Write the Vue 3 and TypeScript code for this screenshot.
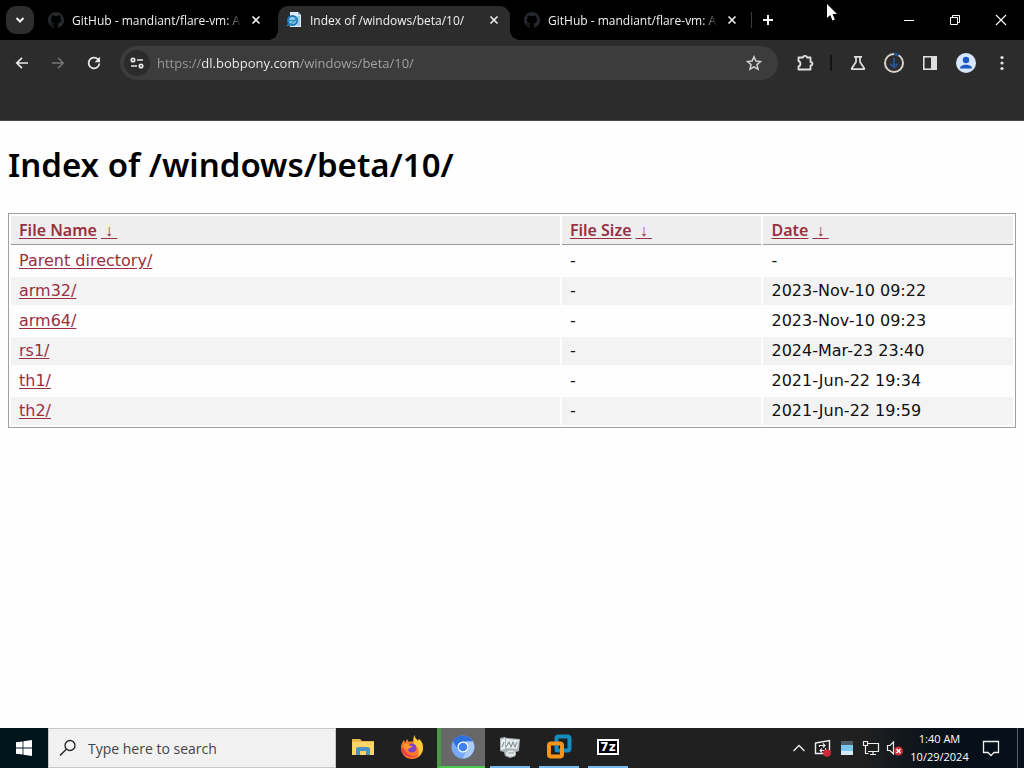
<script setup lang="ts">
import { ref } from 'vue'

interface Tab {
  id: number
  title: string
  icon: 'github' | 'page'
}

interface Entry {
  name: string
  size: string
  date: string
}

const tabs: Tab[] = [
  { id: 1, title: 'GitHub - mandiant/flare-vm: A', icon: 'github' },
  { id: 2, title: 'Index of /windows/beta/10/', icon: 'page' },
  { id: 3, title: 'GitHub - mandiant/flare-vm: A', icon: 'github' },
]
const activeTab = ref(2)
const url = ref('https://dl.bobpony.com/windows/beta/10/')
const query = ref('')

const columns: string[] = ['File Name', 'File Size', 'Date']
const entries: Entry[] = [
  { name: 'Parent directory/', size: '-', date: '-' },
  { name: 'arm32/', size: '-', date: '2023-Nov-10 09:22' },
  { name: 'arm64/', size: '-', date: '2023-Nov-10 09:23' },
  { name: 'rs1/', size: '-', date: '2024-Mar-23 23:40' },
  { name: 'th1/', size: '-', date: '2021-Jun-22 19:34' },
  { name: 'th2/', size: '-', date: '2021-Jun-22 19:59' },
]
</script>

<template>
  <div class="screen">
    <header class="browser">
      <div class="tabstrip">
        <button class="tab-search" aria-label="Search tabs">
          <svg width="12" height="12" viewBox="0 0 12 12"><path d="M2.5 4 6 7.5 9.500 4" fill="none" stroke="#eee" stroke-width="2" /></svg>
        </button>
        <div class="tabs">
          <div v-for="t in tabs" :key="t.id" class="tab" :class="{ active: t.id === activeTab }">
            <svg v-if="t.icon === 'github'" class="favicon" viewBox="0 0 16 16">
              <path fill="#25282c" d="M8 0C3.600 0 0 3.600 0 8c0 3.500 2.300 6.500 5.500 7.600.4.100.5-.2.500-.4v-1.400c-2.200.5-2.700-1-2.700-1-.4-.9-.9-1.200-.9-1.200-.7-.5.100-.5.100-.5.800.100 1.200.8 1.200.8.700 1.200 1.900.9 2.300.7.100-.5.300-.9.500-1.100-1.800-.2-3.600-.9-3.600-4 0-.9.300-1.600.8-2.100-.1-.2-.4-1 .1-2.100 0 0 .7-.2 2.200.8a7.500 7.500 0 0 1 4 0c1.500-1 2.200-.8 2.200-.8.500 1.100.2 1.900.1 2.100.5.500.8 1.200.8 2.100 0 3.100-1.900 3.800-3.700 4 .3.300.6.800.6 1.500v2.200c0 .2.100.5.500.4A8 8 0 0 0 16 8c0-4.400-3.600-8-8-8z" />
            </svg>
            <svg v-else class="favicon" viewBox="0 0 16 16">
              <path d="M4 0h8l3 3v12H4z" fill="#dcecfa" />
              <path d="M12 0v3h3z" fill="#7fb2dd" />
              <path d="M11 4h3v10h-3z" fill="#a8cdf0" />
              <circle cx="6.500" cy="8.500" r="4.500" fill="#9ccbe8" stroke="#1b79b8" stroke-width="2" />
              <path d="M3 8.500h8M1 13c1 1 6-1 10-8" stroke="#2f95c4" stroke-width="1.500" fill="none" />
            </svg>
            <button class="tab-title" @click="activeTab = t.id">{{ t.title }}</button>
            <button class="tab-close" aria-label="Close tab">
              <svg width="10" height="10" viewBox="0 0 10 10"><path d="M1.500 1.500l7 7m0-7l-7 7" stroke="#eee" stroke-width="1.600" /></svg>
            </button>
          </div>
        </div>
        <span class="strip-divider"></span>
        <button class="new-tab" aria-label="New tab">
          <svg width="12" height="12" viewBox="0 0 12 12"><path d="M6 1v10M1 6h10" stroke="#f4f4f4" stroke-width="2" /></svg>
        </button>
        <div class="window-controls">
          <button aria-label="Minimize"><svg width="12" height="12" viewBox="0 0 12 12"><path d="M1 6.500h10" stroke="#fff" /></svg></button>
          <button aria-label="Restore"><svg width="12" height="12" viewBox="0 0 12 12"><path d="M1.500 3.500h7v7h-7zM3.500 3.500v-2h7v7h-2" fill="none" stroke="#fff" /></svg></button>
          <button aria-label="Close"><svg width="12" height="12" viewBox="0 0 12 12"><path d="M1 1l10 10M11 1L1 11" stroke="#fff" stroke-width="1.100" /></svg></button>
        </div>
      </div>

      <div class="toolbar">
        <nav class="nav">
          <button aria-label="Back"><svg width="14" height="14" viewBox="0 0 14 14"><path d="M13 7H2M7 1.800L1.800 7 7 12.200" fill="none" stroke="#e8e8e8" stroke-width="1.700" /></svg></button>
          <button aria-label="Forward"><svg width="14" height="14" viewBox="0 0 14 14"><path d="M1 7h11M7 1.800L12.200 7 7 12.200" fill="none" stroke="#747474" stroke-width="1.600" /></svg></button>
          <button aria-label="Reload"><svg width="14" height="14" viewBox="0 0 14 14"><path d="M12.400 7.500A5.400 5.400 0 1 1 11 3.300" fill="none" stroke="#e8e8e8" stroke-width="1.800" /><path d="M13 .8v5.400H7.600z" fill="#e8e8e8" /></svg></button>
        </nav>
        <div class="omnibox">
          <button class="site-info" aria-label="View site information">
            <svg width="14" height="12" viewBox="0 0 14 12"><g fill="none" stroke="#e6e6e6" stroke-width="1.700"><circle cx="3" cy="3" r="1.700" /><path d="M7 3h6M1 9h6" /><circle cx="11" cy="9" r="1.700" /></g></svg>
          </button>
          <input v-model="url" class="url" type="text" aria-label="Address" spellcheck="false" />
          <button class="bookmark" aria-label="Bookmark this tab">
            <svg width="16" height="16" viewBox="0 0 16 16"><path d="M8 1.800l1.900 4.300 4.600.4-3.500 3.100 1 4.600L8 11.800l-4 2.400 1-4.600-3.500-3.100 4.600-.4z" fill="none" stroke="#d0d0d0" stroke-width="1.500" /></svg>
          </button>
        </div>
        <button class="extensions" aria-label="Extensions">
          <svg width="18" height="18" viewBox="0 0 18 18"><path d="M2.500 3.500H7c0-2.300 4-2.300 4 0h3.500V8c2.500 0 2.500 3.500 0 3.500v4h-12v-3c2.500-.5 2.500-5 0-5.500z" fill="none" stroke="#e0e0e0" stroke-width="1.800" stroke-linejoin="round" /></svg>
        </button>
        <span class="tool-divider"></span>
        <div class="tools">
          <button aria-label="Labs"><svg width="16" height="16" viewBox="0 0 16 16"><path d="M4 1.800h8M6 2v5L1.800 13.200c-.3.600 0 1 .6 1h11.200c.6 0 .9-.4.600-1L10 7V2" fill="none" stroke="#e0e0e0" stroke-width="1.700" /></svg></button>
          <button aria-label="Downloads"><svg width="22" height="22" viewBox="0 0 22 22"><circle cx="11" cy="11" r="9" fill="none" stroke="#d7d2cc" stroke-width="2" /><path d="M11 2a9 9 0 0 1 4.500 1.200" fill="none" stroke="#284a86" stroke-width="3" /><path d="M11 6v9M7 11.500l4 4 4-4" fill="none" stroke="#27508f" stroke-width="2" /></svg></button>
          <button aria-label="Side panel"><svg width="16" height="16" viewBox="0 0 16 16"><rect x="1.800" y="1.800" width="12.400" height="12.400" fill="none" stroke="#dedede" stroke-width="1.600" /><path d="M9 2h5v12H9z" fill="#dedede" /></svg></button>
          <button aria-label="Profile"><svg width="20" height="20" viewBox="0 0 20 20"><circle cx="10" cy="10" r="10" fill="#d8e6fd" /><circle cx="10" cy="7" r="3.200" fill="#1a5bc4" /><path d="M4 15.500c0-5 12-5 12 0z" fill="#1a5bc4" /></svg></button>
          <button aria-label="Menu"><svg width="4" height="16" viewBox="0 0 4 16"><g fill="#e6e6e6"><circle cx="2" cy="2.500" r="1.600" /><circle cx="2" cy="8" r="1.600" /><circle cx="2" cy="13.500" r="1.600" /></g></svg></button>
        </div>
      </div>
    </header>

    <main class="page">
      <h1>Index of /windows/beta/10/</h1>
      <table>
        <thead>
          <tr>
            <th v-for="c in columns" :key="c" scope="col"><a href="#">{{ c }}</a><a href="#" class="sort">&nbsp;↓&nbsp;</a></th>
          </tr>
        </thead>
        <tbody>
          <tr v-for="e in entries" :key="e.name">
            <td><a href="#">{{ e.name }}</a></td>
            <td>{{ e.size }}</td>
            <td>{{ e.date }}</td>
          </tr>
        </tbody>
      </table>
    </main>

    <footer class="taskbar">
      <button class="start" aria-label="Start">
        <svg width="16" height="16" viewBox="0 0 16 16"><path d="M0 2.300l6.600-.9v6.200H0zM7.400 1.200L16 0v7.600H7.400zM0 8.400h6.600v6.200L0 13.700zM7.400 8.400H16V16l-8.600-1.200z" fill="#fff" /></svg>
      </button>
      <label class="search">
        <svg width="18" height="18" viewBox="0 0 18 18"><circle cx="11" cy="6.500" r="5" fill="none" stroke="#222" stroke-width="1.300" /><path d="M7.300 10.200L1 16.500" stroke="#222" stroke-width="1.400" /></svg>
        <input v-model="query" type="text" placeholder="Type here to search" aria-label="Type here to search" />
      </label>
      <div class="apps">
        <button aria-label="File Explorer">
          <svg width="24" height="24" viewBox="0 0 24 24"><path d="M1 4h8l2 2h12v14H1z" fill="#eab64c" /><path d="M1 7h22v13H1z" fill="#fbd568" /><path d="M5 20v-6c0-1 1-2 2-2h10c1 0 2 1 2 2v6h-4v-4H9v4z" fill="#4a92c8" /></svg>
        </button>
        <button aria-label="Firefox">
          <svg width="24" height="24" viewBox="0 0 24 24"><path d="M15 0c-1 3 2 4 3 6l1-2c3 3 4 5 4 9a11 11 0 0 1-22 0c0-3 1-6 3-8l1 3 2-4 2 3c2-1 4-1 5 0 0-3-1-5 1-7z" fill="#ff7b2c" /><path d="M15 0c-1 3 2 4 3 6l1-2c3 3 4 5 4 9 0 3-2 7-5 9 2-6 0-11-4-12-1-4-1-8 1-10z" fill="#ffc93a" /><path d="M1 13c1 8 10 12 18 7-5 2-9 1-12-2S3 12 1 13z" fill="#f03b50" /><circle cx="12" cy="13" r="4.500" fill="#8045c7" /><path d="M4 9c3-1 5 0 6 2h3c-1 2-4 1-5 4-2-1-4-3-4-6z" fill="#ff9a2e" /></svg>
        </button>
        <button class="current" aria-label="Chromium">
          <svg width="24" height="24" viewBox="0 0 24 24"><circle cx="12" cy="12" r="11.500" fill="#77a9f7" /><path d="M12 .5A11.500 11.500 0 0 1 22 6.500H12a5.500 5.500 0 0 0-5 8L2 6.200A11.500 11.500 0 0 1 12 .5z" fill="#2f6fdb" /><path d="M22 6.500c4 8-2 17-10.500 17l5.200-8.700c1.500-3 .3-7-3-8.300z" fill="#a9cbfb" /><circle cx="12" cy="12" r="5.500" fill="#fff" /><circle cx="12" cy="12" r="4.300" fill="#3e82ea" /></svg>
        </button>
        <button class="open" aria-label="Process Monitor">
          <svg width="24" height="24" viewBox="0 0 24 24"><path d="M2 3l5-1 2 1 13 1-1 12-6 2 3 3-6 2-5-2-1-4-4-1z" fill="#aab4b9" /><path d="M3 5l4-2v11l-4 1zM8 4l13 1-2 9-11-1z" fill="#e9eff1" /><path d="M8 12l3-5 2 5 2-5 2 5 2-5M4 12l2-5" fill="none" stroke="#8b979d" stroke-width="1.200" /><ellipse cx="13" cy="18.500" rx="5" ry="3" fill="#e4e8e9" /><path d="M10 18h6" stroke="#9aa5aa" stroke-width="1.200" /></svg>
        </button>
        <button class="open" aria-label="VMware">
          <svg width="26" height="26" viewBox="0 0 26 26"><rect x="10.500" y="2.500" width="13" height="14" rx="2" fill="none" stroke="#168cc0" stroke-width="4" /><rect x="3" y="9.500" width="13" height="13" rx="2" fill="none" stroke="#f7941d" stroke-width="4" /><path d="M10.500 11.500v5H14" fill="none" stroke="#168cc0" stroke-width="3" /></svg>
        </button>
        <button class="open" aria-label="7-Zip"><span class="zip">7z</span></button>
      </div>
      <div class="tray">
        <button aria-label="Show hidden icons"><svg width="14" height="10" viewBox="0 0 14 10"><path d="M1.500 8L7 2.500 12.500 8" fill="none" stroke="#eee" stroke-width="1.300" /></svg></button>
        <button aria-label="Sync status"><svg width="18" height="18" viewBox="0 0 18 18"><path d="M1.500 4L15.500 1.500v13H1.500z" fill="none" stroke="#eee" stroke-width="1.400" /><path d="M5.500 8V6.500h5M9 4.500l2 2-2 2M11.500 9v2.500h-5M8 9.500l-2 2 2 2" fill="none" stroke="#eee" stroke-width="1.100" /><circle cx="13" cy="14" r="3.800" fill="#cf2836" /></svg></button>
        <button aria-label="Virtual machine tools"><svg width="14" height="16" viewBox="0 0 14 16"><path d="M1 1h12v14H1z" fill="#7cc7ef" /><path d="M1 1h12v4H1z" fill="#4c5f6b" /><path d="M1 11h12v4H1z" fill="#d5eaf5" /></svg></button>
        <button aria-label="Network"><svg width="18" height="16" viewBox="0 0 18 16"><path d="M5 3.500h11.500v8H6M11 11.500v3M8 14.500h6M1.500 1.500h4v4h-4zM3.500 5.500v8h3" fill="none" stroke="#eee" stroke-width="1.200" /></svg></button>
        <button aria-label="Volume muted"><svg width="18" height="16" viewBox="0 0 18 16"><path d="M1.500 5.500H4L7.500 2v12L4 10.500H1.500z" fill="none" stroke="#eee" stroke-width="1.200" /><circle cx="12.500" cy="11" r="4.500" fill="#d22f3b" /><path d="M10.500 9l4 4m0-4l-4 4" stroke="#fff" stroke-width="1.300" /></svg></button>
      </div>
      <button class="clock"><time>1:40 AM</time><time>10/29/2024</time></button>
      <button class="notify" aria-label="Notifications">
        <svg width="18" height="18" viewBox="0 0 18 18"><path d="M1.500 2.500h15v11H12L9 16.500l-3-3H1.500z" fill="none" stroke="#eee" stroke-width="1.300" /></svg>
      </button>
      <button class="show-desktop" aria-label="Show desktop"></button>
    </footer>

    <svg class="pointer" width="12" height="19" viewBox="0 0 12 19"><path d="M1 1v14l3.200-3 2.300 5.500 2.300-1L6.500 11H11z" fill="#fff" /></svg>
  </div>
</template>

<style>
body {
  margin: 0;
}
</style>

<style scoped>
.screen {
  position: relative;
  display: flex;
  flex-direction: column;
  min-height: 100vh;
  background: #fefefe;
  font-family: "Open Sans", "Noto Sans", sans-serif;
}
button {
  display: flex;
  align-items: center;
  justify-content: center;
  margin: 0;
  padding: 0;
  border: 0;
  background: none;
  color: inherit;
  font: inherit;
}
svg {
  display: block;
  flex: none;
}

.browser {
  background: #2c2c2c;
  border-bottom: 1px solid #4a4a4a;
}
.tabstrip {
  display: flex;
  align-items: center;
  height: 40px;
  padding-left: 6px;
  background: #000;
  color: #f1f1f1;
  font-size: 12px;
  font-weight: 500;
}
.tab-search {
  width: 28px;
  height: 28px;
  margin-right: 6px;
  border-radius: 10px;
  background: #2e2e2e;
}
.tabs {
  display: flex;
  align-self: stretch;
  flex: 0 1 708px;
  gap: 6px;
  min-width: 0;
}
.tab {
  position: relative;
  display: flex;
  align-items: center;
  flex: 1 1 0;
  min-width: 0;
  box-sizing: border-box;
  margin-top: 6px;
  padding: 0 10px 6px 8px;
}
.active {
  border-radius: 10px 10px 0 0;
  background: #2c2c2c;
}
.active::before,
.active::after {
  content: "";
  position: absolute;
  bottom: 0;
  width: 10px;
  height: 10px;
}
.active::before {
  right: 100%;
  background: radial-gradient(circle at 0 0, transparent 10px, #2c2c2c 10px);
}
.active::after {
  left: 100%;
  background: radial-gradient(circle at 100% 0, transparent 10px, #2c2c2c 10px);
}
.favicon {
  width: 16px;
  height: 16px;
  margin-right: 8px;
}
.tab-title {
  flex: 1;
  justify-content: flex-start;
  min-width: 0;
  overflow: hidden;
  white-space: nowrap;
  -webkit-mask-image: linear-gradient(to left, transparent 4px, #000 20px);
  mask-image: linear-gradient(to left, transparent 4px, #000 20px);
}
.tab-close {
  width: 12px;
  height: 16px;
  margin-left: 4px;
}
.strip-divider {
  width: 1px;
  height: 16px;
  margin-left: 3px;
  background: #3c3c3c;
}
.new-tab {
  width: 28px;
  height: 28px;
  margin-left: 2px;
}
.window-controls {
  display: flex;
  align-self: stretch;
  margin-left: auto;
}
.window-controls button {
  width: 46px;
}

.toolbar {
  display: flex;
  align-items: center;
  height: 46px;
  padding-bottom: 34px;
}
.nav {
  display: flex;
  margin-left: 4px;
}
.nav button {
  width: 36px;
  height: 34px;
}
.omnibox {
  display: flex;
  align-items: center;
  flex: 1;
  height: 34px;
  margin-left: 8px;
  border-radius: 17px;
  background: #3c3c3c;
}
.site-info {
  width: 26px;
  height: 26px;
  margin-left: 4px;
  border-radius: 13px;
  background: #2b2b2b;
}
.url {
  flex: 1;
  min-width: 0;
  margin: 0 8px 0 7px;
  padding: 0;
  border: 0;
  outline: 0;
  background: linear-gradient(to right, #9c9c9c 44px, #f2f2f2 44px, #f2f2f2 142px, #a6a6a6 142px);
  -webkit-background-clip: text;
  background-clip: text;
  color: transparent;
  font-family: inherit;
  font-size: 13px;
  line-height: 20px;
}
.bookmark {
  width: 28px;
  height: 28px;
  margin-right: 10px;
}
.extensions {
  width: 36px;
  height: 34px;
  margin-left: 9px;
}
.tool-divider {
  width: 2px;
  height: 16px;
  margin: 0 8px 0 7px;
  background: #141414;
}
.tools {
  display: flex;
  margin-right: 4px;
}
.tools button {
  width: 36px;
  height: 34px;
}

.page {
  flex: 1;
  padding: 0 8px;
  color: #111;
  font-family: "Noto Sans", "Open Sans", sans-serif;
  font-size: 16px;
  line-height: 20px;
}
h1 {
  margin: 19px 0 23px;
  color: #000;
  font-size: 33px;
  font-weight: 600;
  line-height: 50px;
}
table {
  width: 100%;
  table-layout: fixed;
  border: 1px solid #a0a0a0;
  border-collapse: separate;
  border-spacing: 2px;
}
th,
td {
  box-sizing: border-box;
  height: 28px;
  padding: 4px 8px;
  text-align: left;
}
th {
  height: 29px;
  border-bottom: 1px solid #999;
  background: #eee;
  font-weight: 600;
}
th:nth-child(1) {
  width: 55%;
}
th:nth-child(2) {
  width: 20%;
}
td {
  font-family: "DejaVu Sans", "Noto Sans", sans-serif;
}
tbody tr:nth-child(even) td {
  background: #f3f3f3;
}
.page a {
  color: #993040;
  text-underline-offset: 2px;
}
.sort {
  margin-left: 4px;
}

.taskbar {
  display: flex;
  height: 40px;
  background: linear-gradient(to right, #202020 84%, #071019 92%);
  color: #fff;
  font-size: 12px;
}
.start {
  width: 48px;
  background: #00141c;
}
.search {
  display: flex;
  align-items: center;
  flex: 0 1 288px;
  box-sizing: border-box;
  min-width: 0;
  padding: 0 10px;
  gap: 11px;
  border: 1px solid #c8c8c8;
  background: #f2f2f2;
}
.search input {
  flex: 1;
  min-width: 0;
  padding: 0;
  border: 0;
  outline: 0;
  background: none;
  font-family: inherit;
  font-size: 14px;
}
.search input::placeholder {
  color: #444;
  opacity: 1;
}
.apps {
  display: flex;
  margin-left: 3px;
  gap: 1px;
}
.apps button {
  box-sizing: border-box;
  width: 48px;
  border-bottom: 2px solid transparent;
}
.apps .current {
  border-color: #4cc94c;
  border-left: 4px solid #4a9b45;
  background: #686868;
}
.apps .open {
  width: 40px;
  margin: 0 4px;
  border-color: #76b9ed;
}
.zip {
  padding: 0 1px;
  border: 2px solid #fff;
  background: #000;
  font-family: "DejaVu Sans", sans-serif;
  font-size: 12px;
  font-weight: 700;
  line-height: 12px;
}
.tray {
  display: flex;
  margin-left: auto;
}
.tray button {
  width: 24px;
}
.clock {
  flex-direction: column;
  width: 65px;
  font-size: 11px;
  line-height: 18px;
}
.notify {
  width: 38px;
}
.show-desktop {
  width: 14px;
}
.show-desktop::after {
  content: "";
  align-self: stretch;
  width: 1px;
  background: #56606a;
}
.pointer {
  position: absolute;
  top: 3px;
  left: 826px;
}
</style>
